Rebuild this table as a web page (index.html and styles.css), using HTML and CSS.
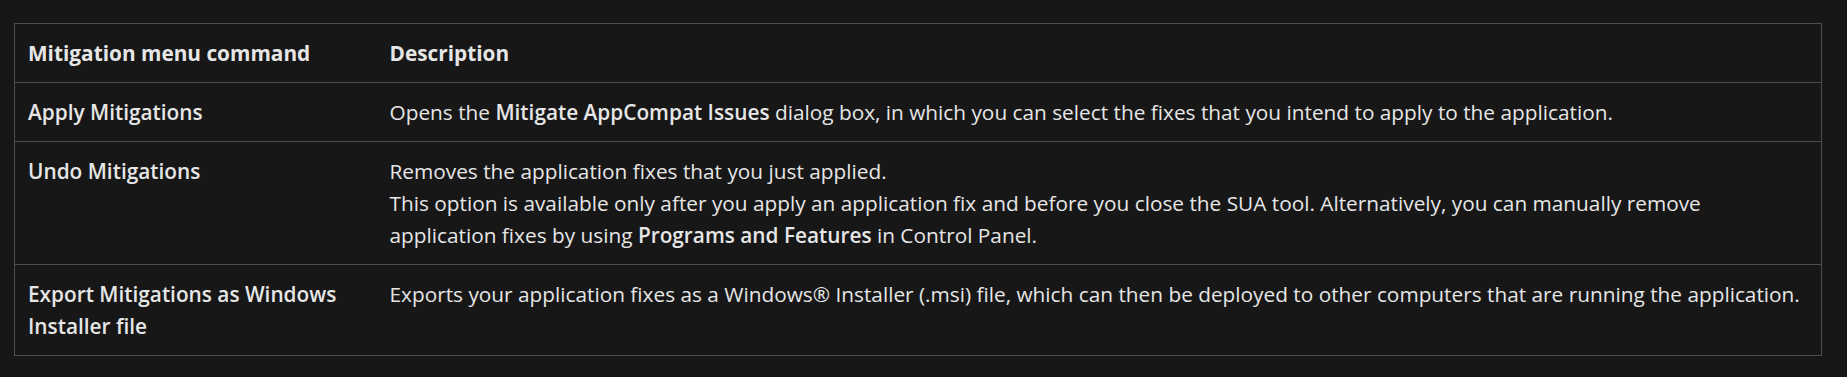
FILE: index.html
```html
<!DOCTYPE html>
<html lang="en">
<head>
<meta charset="utf-8">
<title>Mitigation menu commands</title>
<link rel="stylesheet" href="styles.css">
</head>
<body>
<div class="wrap">
<table class="cmd-table">
<colgroup><col class="col-cmd"><col class="col-desc"></colgroup>
<thead>
<tr><th>Mitigation menu command</th><th>Description</th></tr>
</thead>
<tbody>
<tr>
<td class="cmd">Apply Mitigations</td>
<td>Opens the <strong>Mitigate AppCompat Issues</strong> dialog box, in which you can select the fixes that you intend to apply to the application.</td>
</tr>
<tr>
<td class="cmd">Undo Mitigations</td>
<td>Removes the application fixes that you just applied.<br>This option is available only after you apply an application fix and before you close the SUA tool. Alternatively, you can manually remove application fixes by using <strong>Programs and Features</strong> in Control Panel.</td>
</tr>
<tr>
<td class="cmd">Export Mitigations as Windows Installer file</td>
<td>Exports your application fixes as a Windows® Installer (.msi) file, which can then be deployed to other computers that are running the application.</td>
</tr>
</tbody>
</table>
</div>
</body>
</html>
```
FILE: styles.css
```css
html, body {
  margin: 0;
  padding: 0;
  background: #171717;
}
body {
  color: #e6e6e6;
  font-family: "Open Sans", "Noto Sans", sans-serif;
  font-size: 20.8px;
  line-height: 32px;
}
.wrap {
  padding: 23px 25px 0 14px;
}
.cmd-table {
  width: 100%;
  border-collapse: collapse;
  table-layout: fixed;
  border: 1px solid #4d4d4d;
}
.col-cmd { width: 362px; }
.cmd-table th,
.cmd-table td {
  border-top: 1px solid #4d4d4d;
  padding: 13px 13px;
  text-align: left;
  vertical-align: top;
}
.cmd-table th {
  font-weight: 700;
}
.cmd-table td.cmd {
  font-weight: 600;
}
.cmd-table strong {
  font-weight: 600;
}
```
